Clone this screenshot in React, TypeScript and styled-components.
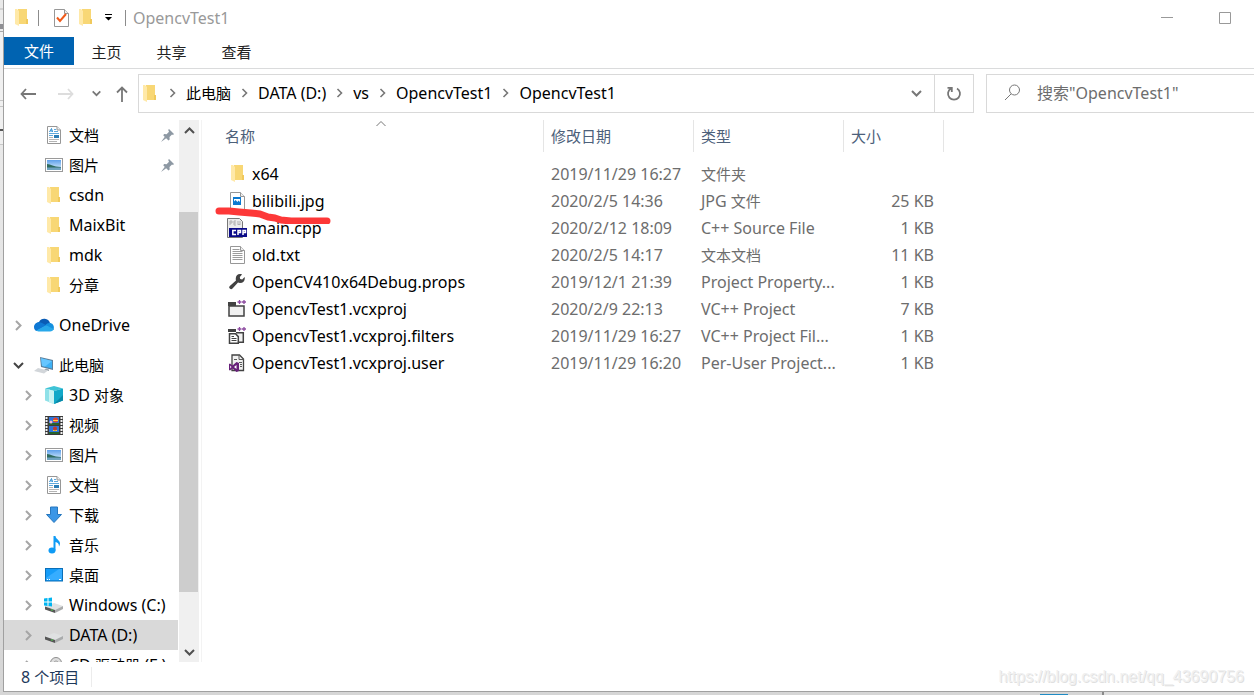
import React from "react";
import styled, { createGlobalStyle } from "styled-components";

const sans = `"Noto Sans", "Noto Sans CJK SC", sans-serif`;

const GlobalStyle = createGlobalStyle`
  *, *::before, *::after { box-sizing: border-box; }
  body { margin: 0; overflow: hidden; background: #e4e4e4; }
  button, input { font: inherit; color: inherit; border: 0; background: none; padding: 0; margin: 0; outline: none; }
  svg { display: block; flex: none; }
`;

const Desktop = styled.div`
  display: flex;
  height: 100vh;
  padding: 0 0 3px 3px;
  background: linear-gradient(#eeeeee, #d6d6d6);
  position: relative;
`;

const Backdrop = styled.div`
  position: absolute;
  left: 0;
  top: 0;
  width: 3px;
  height: 145px;
  background: linear-gradient(
    #e9e9e9 8px, #d2d2d2 8px 10px, #ececec 10px 24px, #8f8f94 24px 29px, #ececec 29px 31px,
    #a9a9a9 31px 32px, #f0f0f0 32px 100px, #c4c4c4 100px 101px, #f0f0f0 101px 106px,
    #c4c4c4 106px 107px, #f0f0f0 107px 129px, #555 129px 131px, #f0f0f0 131px
  );
  border-bottom: 1px solid #c8c8c8;
`;

const BackdropEdge = styled.div`
  position: absolute;
  right: 0;
  bottom: 0;
  width: 152px;
  height: 3px;
  border-left: 2px solid #8a8a8a;
  background: #dedede;
`;

const BackdropTab = styled.div`
  position: absolute;
  right: 186px;
  bottom: 0;
  width: 28px;
  height: 1px;
  background: #1f8bc4;
`;

const Window = styled.div`
  flex: 1;
  min-width: 0;
  display: flex;
  flex-direction: column;
  position: relative;
  background: #fff;
  border-left: 1px solid #a0a0a0;
  border-bottom: 1px solid #a0a0a0;
  font: 15px/20px ${sans};
  color: #000;
`;

const Latin = styled.span`
  font-size: 16px;
`;

const TitleBar = styled.header`
  display: flex;
  align-items: center;
  height: 37px;
  padding: 0 0 2px 11px;
`;

const QuickButton = styled.button<{ $w: number }>`
  width: ${(p) => p.$w}px;
  height: 28px;
  display: flex;
  align-items: center;
`;

const Divider = styled.span<{ $gap: number }>`
  width: 1px;
  height: 16px;
  background: #8c8c8c;
  margin-right: ${(p) => p.$gap}px;
`;

const Title = styled.h1`
  flex: 1;
  margin: 0;
  font: inherit;
  color: #999;
`;

const CaptionButton = styled.button`
  width: 58px;
  height: 35px;
  display: flex;
  align-items: center;
  justify-content: center;
`;

const Tabs = styled.nav`
  display: flex;
  height: 32px;
  padding-bottom: 3px;
  border-bottom: 1px solid #dadbdc;
`;

const Tab = styled.button<{ $active?: boolean }>`
  width: ${(p) => (p.$active ? 70 : 65)}px;
  padding-top: ${(p) => (p.$active ? 0 : 2)}px;
  background: ${(p) => (p.$active ? "#0063b1" : "none")};
  color: ${(p) => (p.$active ? "#fff" : "#222")};
`;

const NavRow = styled.div`
  display: flex;
  align-items: center;
  height: 51px;
  padding: 0 0 2px 6px;
`;

const NavButton = styled.button<{ $w: number }>`
  width: ${(p) => p.$w}px;
  height: 30px;
  display: flex;
  align-items: center;
  justify-content: center;
`;

const AddressBox = styled.div`
  flex: 1;
  min-width: 0;
  display: flex;
  align-items: center;
  height: 39px;
  padding-left: 4px;
  border: 1px solid #d9d9d9;
`;

const Crumbs = styled.ol`
  flex: 1;
  display: flex;
  align-items: center;
  margin: 0;
  padding: 0 0 2px 3px;
  list-style: none;
  white-space: nowrap;
`;

const Crumb = styled.li`
  display: flex;
  align-items: center;
`;

const RefreshButton = styled.button`
  width: 39px;
  height: 37px;
  display: flex;
  align-items: center;
  justify-content: center;
  border-left: 1px solid #d9d9d9;
`;

const SearchBox = styled.label`
  width: 268px;
  height: 39px;
  margin-left: 12px;
  padding: 0 0 2px 17px;
  display: flex;
  align-items: center;
  gap: 16px;
  border: 1px solid #d9d9d9;
  border-right: 0;
`;

const SearchInput = styled.input`
  flex: 1;
  min-width: 0;
  font-size: 16px;
  &::placeholder { color: #6d6d6d; opacity: 1; }
`;

const Body = styled.div`
  flex: 1;
  min-height: 0;
  display: flex;
`;

const Sidebar = styled.aside`
  width: 198px;
  display: flex;
  gap: 1px;
  padding-right: 2px;
  border-right: 1px solid #f3f3f3;
  overflow: hidden;
`;

const Tree = styled.nav`
  flex: 1;
  min-width: 0;
  overflow: hidden;
`;

const TreeGroup = styled.ul`
  margin: 0 0 10px;
  padding: 0;
  list-style: none;
`;

const TreeItem = styled.button<{ $level: number; $selected?: boolean }>`
  display: flex;
  align-items: center;
  width: 100%;
  height: 30px;
  padding-left: ${(p) => (p.$level ? 14 : 4)}px;
  padding-right: 4px;
  background: ${(p) => (p.$selected ? "#d9d9d9" : "none")};
  white-space: nowrap;
  text-align: left;
`;

const Expander = styled.span`
  width: 20px;
  display: flex;
  justify-content: center;
`;

const TreeIcon = styled.span`
  width: 31px;
  display: flex;
  justify-content: center;
`;

const TreeLabel = styled.span`
  flex: 1;
`;

const ScrollTrack = styled.div`
  width: 20px;
  display: flex;
  flex-direction: column;
  background: #f0f0f0;
`;

const ScrollButton = styled.button`
  height: 20px;
  display: flex;
  align-items: center;
  justify-content: center;
`;

const ScrollArea = styled.div`
  flex: 1;
  display: flex;
  flex-direction: column;
`;

const Before = styled.div`
  flex: 72;
`;

const Thumb = styled.div`
  flex: 379;
  width: 19px;
  background: #cdcdcd;
`;

const After = styled.div`
  flex: 50;
`;

const FilePane = styled.main`
  flex: 1;
  min-width: 0;
  padding-left: 16px;
  position: relative;
`;

const Table = styled.table`
  width: 726px;
  table-layout: fixed;
  border-collapse: separate;
  border-spacing: 0;
  & thead::after { content: ""; display: block; height: 8px; }
`;

const HeadCell = styled.th<{ $w: number }>`
  position: relative;
  width: ${(p) => p.$w}px;
  height: 32px;
  padding: 0 7px;
  text-align: left;
  font-weight: 400;
  color: #4c607a;
  border-right: 1px solid #e5e5e5;
`;

const SortMark = styled.span`
  position: absolute;
  top: 0;
  left: 50%;
  transform: translateX(-50%);
`;

const Cell = styled.td<{ $right?: boolean }>`
  height: 27px;
  padding: 0 10px 0 7px;
  color: #6d6d6d;
  text-align: ${(p) => (p.$right ? "right" : "left")};
  white-space: nowrap;
`;

const FileName = styled.div`
  display: flex;
  align-items: center;
  gap: 5px;
  padding-left: 2px;
  color: #000;
`;

const FileIcon = styled.span`
  width: 20px;
  display: flex;
  justify-content: center;
`;

const Underline = styled.svg`
  position: absolute;
  left: 12px;
  top: 84px;
  pointer-events: none;
`;

const StatusBar = styled.footer`
  display: flex;
  align-items: center;
  height: 29px;
  padding-left: 17px;
  color: #1e395b;
`;

const StatusText = styled.span`
  padding-right: 12px;
  border-right: 1px solid #ececec;
`;

const Watermark = styled.span`
  position: absolute;
  right: 10px;
  bottom: 4px;
  font: 16px/20px "Liberation Sans", sans-serif;
  color: #f0f0f0;
  text-shadow: 1px 1px 0 #e0e0e0;
`;

/* Latin runs are set one size larger than the Chinese text beside them. */
const Mixed = ({ text }: { text: string }) => (
  <span>
    {text.split(/([\u4e00-\u9fff]+)/).map((run, i) => (i % 2 ? run : run && <Latin key={i}>{run}</Latin>))}
  </span>
);

type Dir = "up" | "down" | "right";
const chevrons: Record<Dir, string> = {
  up: "M2 9 6.500 4.500 11 9",
  down: "M2 4 6.500 8.500 11 4",
  right: "M4 2 8.500 6.500 4 11",
};

const Chevron = ({ dir, color = "#777", size = 13, width = 2 }: { dir: Dir; color?: string; size?: number; width?: number }) => (
  <svg width={size} height={size} viewBox="0 0 13 13" fill="none" stroke={color} strokeWidth={width}>
    <path d={chevrons[dir]} />
  </svg>
);

const CrumbArrow = () => (
  <svg width="27" height="13" viewBox="0 0 27 13" fill="none" stroke="#777" strokeWidth="1.600">
    <path d="M11.500 3l4 4-4 4" />
  </svg>
);

const Folder = () => (
  <svg width="13" height="17" viewBox="0 0 13 17">
    <path d="M3 0h9v10h1v5H3z" fill="#f8d775" />
    <path d="M0 0h2l2 2v15l-4-2z" fill="#ffe9a8" />
    <path d="M11 10h2v5h-2z" fill="#f0c95c" />
  </svg>
);

const DocIcon = () => (
  <svg width="16" height="18" viewBox="0 0 16 18">
    <path d="M1.500.5h9.500L14.500 4v13.500h-13z" fill="#fff" stroke="#979797" />
    <path d="M11 .5V4h3.500" fill="#eee" stroke="#979797" />
    <path d="M3.500 6 5.500 2.500 6.500 6M4.500 5h2" fill="none" stroke="#2a8dd4" />
    <path d="M8 3.500h2M8 5.500h4M3 7.500h10M3 9.500h4" stroke="#5fa9dc" />
    <path d="M3 11.500h4M3 13.500h10M3 15.500h8" stroke="#b4b4b4" />
    <rect x="8" y="9" width="5" height="3" fill="#2c7db5" />
  </svg>
);

const PictureIcon = () => (
  <svg width="18" height="14" viewBox="0 0 18 14">
    <defs>
      <linearGradient id="sky" x2="0" y2="1">
        <stop stopColor="#5ea0ea" />
        <stop offset="1" stopColor="#e2f3ff" />
      </linearGradient>
    </defs>
    <rect x=".5" y=".5" width="17" height="13" fill="#fff" stroke="#9a9a9a" />
    <path d="M2 2h14v10H2z" fill="url(#sky)" />
    <path d="M2 6c4 0 6 3 14 3v1H2z" fill="#2f6b5e" />
    <path d="M2 9.500h14V12H2z" fill="#6fa3c0" />
  </svg>
);

const CloudIcon = () => (
  <svg width="20" height="14" viewBox="0 0 20 14">
    <path d="M5 4a6 6 0 0 1 11 1l-4 4-9-4z" fill="#0a5cb5" />
    <path d="M5 4.200C2 4.200 0 6.500 0 9c0 2 1 3.400 2.500 4L13 7.500 8 5A5 5 0 0 0 5 4.200z" fill="#0f78d4" />
    <path d="M15.500 5c-2 0-3 .8-4 2l6 5h2c1-3 0-7-4-7z" fill="#1490df" />
    <path d="M2 12.800 12 7.200l7.700 3.800c-.5 1.500-1.700 2.500-3.700 2.500H4.500z" fill="#28a8ea" />
  </svg>
);

const PcIcon = () => (
  <svg width="20" height="17" viewBox="0 0 20 17">
    <path d="M6 0l13 3v10l-12-3z" fill="#5b7f9c" />
    <path d="M7 1.200 18 4v7.500L8 9z" fill="#3eb1f5" />
    <path d="M7 1.200 18 4l-7 5.500L8 9z" fill="#66c6ff" />
    <path d="M12 11.500l3 1v1.500l-5-1z" fill="#9aa5ad" />
    <path d="M4 11l10 2.500-4 3L0 14z" fill="#d2d6da" />
  </svg>
);

const CubeIcon = () => (
  <svg width="18" height="18" viewBox="0 0 18 18">
    <path d="M9 0l9 2.500L9 5 0 2.500z" fill="#3fc3d6" />
    <path d="M0 2.500 9 5v13l-9-3.500z" fill="#8fe1e8" />
    <path d="M4 3.600 9 5v13l-5-1.600z" fill="#c9f3f3" />
    <path d="M18 2.500 9 5v13l9-3.500z" fill="#12a8c8" />
    <path d="M18 9v5.500L9 18z" fill="#0789a8" />
  </svg>
);

const VideoIcon = () => (
  <svg width="18" height="19" viewBox="0 0 18 19">
    <path d="M0 0h18v19H0z" fill="#3a3a3a" />
    <path d="M1.500 1v18M16.500 1v18" stroke="#f2f2f2" strokeWidth="2" strokeDasharray="2 1" />
    <path d="M4 1h10v8H4zM4 10h10v8H4z" fill="#2f74dc" />
    <path d="M4 7h10v2H4zM4 16h10v2H4z" fill="#25642c" />
    <circle cx="10.500" cy="4" r="2.500" fill="#e2472e" />
    <path d="M8 4h5v1H8zM8 14h4v1H8z" fill="#ffd33c" />
    <circle cx="6" cy="6" r="1.500" fill="#f4b8d3" />
    <circle cx="10" cy="12.500" r="2" fill="#c23b2a" />
  </svg>
);

const DownloadIcon = () => (
  <svg width="18" height="18" viewBox="0 0 18 18">
    <path d="M5.500 1h7v7.500h4L9 16.500 1.500 8.500h4z" fill="#3b96e6" stroke="#2677be" />
  </svg>
);

const MusicIcon = () => (
  <svg width="18" height="18" viewBox="0 0 18 18" fill="#0f9bf5">
    <ellipse cx="7" cy="14.500" rx="3.500" ry="3" />
    <path d="M8.500 0h2c0 3 4.500 4 4.500 7.500 0 1-.4 2-1 3 0-3-1.500-4-3.500-4.500v8.500h-2z" />
  </svg>
);

const DesktopIcon = () => (
  <svg width="18" height="14" viewBox="0 0 18 14">
    <rect x=".5" y=".5" width="17" height="12.500" fill="#169cf8" stroke="#0a6fb8" />
    <path d="M1 10 14 1h3v11H1z" fill="#36adff" />
    <path d="M2 11.500h1M4 11.500h1M14 11.500h2" stroke="#fff" />
  </svg>
);

const DriveIcon = ({ win }: { win?: boolean }) => (
  <svg width="20" height="16" viewBox="0 0 20 16">
    <path d="M1 9.500 10 6l9 3-8 4z" fill="#dfe1e2" />
    <path d="M1 9.500 11 13v3L1 12.500z" fill="#565656" />
    <path d="M19 9v3l-8 4v-3z" fill="#a9abac" />
    <path d="M7 13h2" stroke="#4fd04f" />
    {win && <path d="M0 1.500 3.500 1v3.500H0zM4.500 1 8 .500v4H4.500zM0 5.500h3.500V9L0 8.500zM4.500 5.500H8v4L4.500 9z" fill="#00b4f0" />}
  </svg>
);

const DiscIcon = () => (
  <svg width="18" height="18" viewBox="0 0 18 18">
    <circle cx="11" cy="7" r="5.500" fill="#ddd" stroke="#8d8d8d" />
    <circle cx="11" cy="7" r="2" fill="#fff" stroke="#999" />
    <path d="M0 12l9-3 9 3v3l-9 3-9-3z" fill="#ccc" />
  </svg>
);

const PinIcon = () => (
  <svg width="13" height="13" viewBox="0 0 13 13" fill="#8d98a3">
    <path d="M8 0l5 5-1 1-1-.4-2.500 2.500.2 2.400-1.200 1L2.200 6.200l1-1.100 2.400.2L8 2.800 7.200 1z" />
    <path d="M4 7.500 5.500 9 0 13z" />
  </svg>
);

const PageShape = () => (
  <>
    <path d="M.5.5h10l4 4v13h-14z" fill="#fff" stroke="#979797" />
    <path d="M10.500.5v4h4" fill="#eee" stroke="#979797" />
  </>
);

const JpgIcon = () => (
  <svg width="15" height="18" viewBox="0 0 15 18">
    <PageShape />
    <path d="M3 5h8v8H3z" fill="#0c7ad1" />
    <path d="M4 7h6v3L8.500 8.500 7.500 10 5.500 8 4 9.500z" fill="#fff" />
  </svg>
);

const CppIcon = () => (
  <svg width="20" height="20" viewBox="0 0 20 20">
    <path d="M.5.5h12l3 3v16H.5z" fill="#ececec" stroke="#777" />
    <path d="M3 3v4M3 3h2v2H3M7 7V3h2M7 5h2M7 7h2M11 3v4l1-1 1 1V3" fill="none" stroke="#b0b0b0" />
    <path d="M2 10h18v9H2z" fill="#0a0a88" />
    <path d="M9 12.500H5.800v4H9M11 17v-4.500h2.500v2H11M16 17v-4.500h2.500v2H16" fill="none" stroke="#fff" strokeWidth="1.500" />
  </svg>
);

const TextIcon = () => (
  <svg width="15" height="18" viewBox="0 0 15 18">
    <PageShape />
    <path d="M2.500 3.500h7M2.500 5.500h10M2.500 7.500h10M2.500 9.500h10M2.500 11.500h10M2.500 13.500h10" stroke="#9c9c9c" />
  </svg>
);

const WrenchIcon = () => (
  <svg width="16" height="16" viewBox="0 0 16 16">
    <path d="M11 0c1 0 1.500.1 2 .4L10.800 3l.4 2 2 .4L15.600 3c.8 3-1 6-4.600 6-.8 0-1.400-.2-2-.4L3.500 14.500a1.800 1.800 0 0 1-2.700-2.600L7 6.500C6 3 8 0 11 0z" fill="#424242" />
  </svg>
);

const Plus = () => (
  <>
    <path d="M8.500 0h9.500v5H8.500z" fill="#fff" />
    <path d="M11.500 0v4M9.500 2h4M16 0v4M14 2h4" stroke="#8d4ba0" strokeWidth="1.300" />
  </>
);

const ProjectIcon = () => (
  <svg width="18" height="17" viewBox="0 0 18 17">
    <path d="M1 6h15v10H1z" fill="#f1f1f1" stroke="#424242" strokeWidth="1.500" />
    <path d="M0 2h8v4H0z" fill="#424242" />
    <Plus />
  </svg>
);

const FiltersIcon = () => (
  <svg width="18" height="17" viewBox="0 0 18 17">
    <path d="M0 2h8v3H0z" fill="#424242" />
    <path d="M8 5.700h7.300v9.600H11" fill="#f1f1f1" stroke="#424242" strokeWidth="1.500" />
    <path d="M1.500 6.800h6l2.800 2.800v6.700H1.500z" fill="#fff" stroke="#424242" strokeWidth="1.500" />
    <path d="M3.500 9.500H6M3.500 11.500h5M3.500 13.500h5" stroke="#424242" />
    <Plus />
  </svg>
);

const UserIcon = () => (
  <svg width="16" height="18" viewBox="0 0 16 18">
    <path d="M3 1h7.500L14.500 5v11.500H3z" fill="#f1f1f1" stroke="#424242" strokeWidth="1.300" />
    <path d="M10 1v4.500h4.500M5 5.500h3M10 8.500h3M11 10.500h2M11 12.500h2" fill="none" stroke="#5a5a5a" />
    <path d="M7.500 8 10 9v8l-2.500 1-4-3.500L1 16.500 0 16v-6l1-.5L3.500 11.500z" fill="#68217a" />
    <path d="M7.500 11v4L5 13zM1.200 11.500v3l1.300-1.500z" fill="#fff" />
  </svg>
);

interface Node {
  label: string;
  icon: React.ReactNode;
  level?: number;
  pin?: boolean;
  state?: "open" | "closed";
  selected?: boolean;
}

const groups: Node[][] = [
  [
    { label: "文档", icon: <DocIcon />, pin: true },
    { label: "图片", icon: <PictureIcon />, pin: true },
    { label: "csdn", icon: <Folder /> },
    { label: "MaixBit", icon: <Folder /> },
    { label: "mdk", icon: <Folder /> },
    { label: "分章", icon: <Folder /> },
  ],
  [{ label: "OneDrive", icon: <CloudIcon />, level: 0, state: "closed" }],
  [
    { label: "此电脑", icon: <PcIcon />, level: 0, state: "open" },
    { label: "3D 对象", icon: <CubeIcon />, state: "closed" },
    { label: "视频", icon: <VideoIcon />, state: "closed" },
    { label: "图片", icon: <PictureIcon />, state: "closed" },
    { label: "文档", icon: <DocIcon />, state: "closed" },
    { label: "下载", icon: <DownloadIcon />, state: "closed" },
    { label: "音乐", icon: <MusicIcon />, state: "closed" },
    { label: "桌面", icon: <DesktopIcon />, state: "closed" },
    { label: "Windows (C:)", icon: <DriveIcon win />, state: "closed" },
    { label: "DATA (D:)", icon: <DriveIcon />, state: "closed", selected: true },
    { label: "CD 驱动器 (F:)", icon: <DiscIcon />, state: "closed" },
  ],
];

const files: [React.ReactNode, string, string, string, string][] = [
  [<Folder />, "x64", "2019/11/29 16:27", "文件夹", ""],
  [<JpgIcon />, "bilibili.jpg", "2020/2/5 14:36", "JPG 文件", "25 KB"],
  [<CppIcon />, "main.cpp", "2020/2/12 18:09", "C++ Source File", "1 KB"],
  [<TextIcon />, "old.txt", "2020/2/5 14:17", "文本文档", "11 KB"],
  [<WrenchIcon />, "OpenCV410x64Debug.props", "2019/12/1 21:39", "Project Property...", "1 KB"],
  [<ProjectIcon />, "OpencvTest1.vcxproj", "2020/2/9 22:13", "VC++ Project", "7 KB"],
  [<FiltersIcon />, "OpencvTest1.vcxproj.filters", "2019/11/29 16:27", "VC++ Project Fil...", "1 KB"],
  [<UserIcon />, "OpencvTest1.vcxproj.user", "2019/11/29 16:20", "Per-User Project...", "1 KB"],
];

const path = ["此电脑", "DATA (D:)", "vs", "OpencvTest1", "OpencvTest1"];

export default function App() {
  return (
    <Desktop>
      <GlobalStyle />
      <Backdrop />
      <BackdropEdge />
      <BackdropTab />
      <Window>
        <TitleBar>
          <QuickButton $w={23} aria-label="窗口"><Folder /></QuickButton>
          <Divider $gap={15} />
          <QuickButton $w={25} aria-label="属性">
            <svg width="15" height="18" viewBox="0 0 15 18">
              <PageShape />
              <path d="M3 8.500 6 12l6-7" fill="none" stroke="#f05a1a" strokeWidth="2" />
            </svg>
          </QuickButton>
          <QuickButton $w={26} aria-label="新建文件夹"><Folder /></QuickButton>
          <QuickButton $w={20} aria-label="自定义快速访问工具栏">
            <svg width="7" height="7" viewBox="0 0 7 7"><path d="M0 0h7v1H0zM0 3h7L3.500 6.500z" /></svg>
          </QuickButton>
          <Divider $gap={7} />
          <Title><Mixed text="OpencvTest1" /></Title>
          <CaptionButton aria-label="最小化">
            <svg width="12" height="12" viewBox="0 0 12 12"><path d="M0 5.500h12" stroke="#999" /></svg>
          </CaptionButton>
          <CaptionButton aria-label="最大化">
            <svg width="12" height="12" viewBox="0 0 12 12"><path d="M.5.5h11v11H.5z" fill="none" stroke="#999" /></svg>
          </CaptionButton>
        </TitleBar>
        <Tabs>
          <Tab $active>文件</Tab>
          <Tab>主页</Tab>
          <Tab>共享</Tab>
          <Tab>查看</Tab>
        </Tabs>
        <NavRow>
          <NavButton $w={36} aria-label="后退">
            <svg width="16" height="12" viewBox="0 0 16 12" fill="none" stroke="#777" strokeWidth="1.800"><path d="M6 1 1.500 6 6 11M1.500 6H16" /></svg>
          </NavButton>
          <NavButton $w={40} aria-label="前进">
            <svg width="16" height="12" viewBox="0 0 16 12" fill="none" stroke="#ddd" strokeWidth="1.800"><path d="M10 1l4.500 5L10 11M14.500 6H0" /></svg>
          </NavButton>
          <NavButton $w={20} aria-label="最近位置"><Chevron dir="down" size={11} /></NavButton>
          <NavButton $w={32} aria-label="上移">
            <svg width="14" height="16" viewBox="0 0 14 16" fill="none" stroke="#777" strokeWidth="1.800"><path d="M2 6.500 7 1.500l5 5M7 1.500V16" /></svg>
          </NavButton>
          <AddressBox>
            <Folder />
            <Crumbs>
              {path.map((p, i) => (
                <Crumb key={i}><CrumbArrow /><Mixed text={p} /></Crumb>
              ))}
            </Crumbs>
            <NavButton $w={36} aria-label="以前的位置"><Chevron dir="down" /></NavButton>
            <RefreshButton aria-label="刷新">
              <svg width="16" height="16" viewBox="0 0 16 16" fill="none" stroke="#777" strokeWidth="1.800">
                <path d="M11 2.500a6 6 0 1 1-6 0M1.500 1.800h4.300v4.200" />
              </svg>
            </RefreshButton>
          </AddressBox>
          <SearchBox>
            <svg width="17" height="17" viewBox="0 0 17 17" fill="none" stroke="#777">
              <circle cx="10.500" cy="6" r="5" /><path d="M7 10 1 16" />
            </svg>
            <SearchInput placeholder={'搜索"OpencvTest1"'} aria-label="搜索" />
          </SearchBox>
        </NavRow>
        <Body>
          <Sidebar>
            <Tree>
              {groups.map((g, gi) => (
                <TreeGroup key={gi}>
                  {g.map((n) => (
                    <li key={n.label}>
                      <TreeItem $level={n.level ?? 1} $selected={n.selected}>
                        <Expander>
                          {n.state === "open" && <Chevron dir="down" color="#444" />}
                          {n.state === "closed" && <Chevron dir="right" color="#a6a6a6" />}
                        </Expander>
                        <TreeIcon>{n.icon}</TreeIcon>
                        <TreeLabel><Mixed text={n.label} /></TreeLabel>
                        {n.pin && <PinIcon />}
                      </TreeItem>
                    </li>
                  ))}
                </TreeGroup>
              ))}
            </Tree>
            <ScrollTrack>
              <ScrollButton aria-label="向上滚动"><Chevron dir="up" color="#505050" /></ScrollButton>
              <ScrollArea><Before /><Thumb /><After /></ScrollArea>
              <ScrollButton aria-label="向下滚动"><Chevron dir="down" color="#505050" /></ScrollButton>
            </ScrollTrack>
          </Sidebar>
          <FilePane>
            <Table>
              <thead>
                <tr>
                  <HeadCell $w={326}>
                    名称
                    <SortMark>
                      <svg width="11" height="7" viewBox="0 0 11 7" fill="none" stroke="#777"><path d="M1 6l4.500-4.500L10 6" /></svg>
                    </SortMark>
                  </HeadCell>
                  <HeadCell $w={150}>修改日期</HeadCell>
                  <HeadCell $w={150}>类型</HeadCell>
                  <HeadCell $w={100}>大小</HeadCell>
                </tr>
              </thead>
              <tbody>
                {files.map(([icon, name, date, type, size]) => (
                  <tr key={name}>
                    <Cell><FileName><FileIcon>{icon}</FileIcon><Mixed text={name} /></FileName></Cell>
                    <Cell><Mixed text={date} /></Cell>
                    <Cell><Mixed text={type} /></Cell>
                    <Cell $right><Mixed text={size} /></Cell>
                  </tr>
                ))}
              </tbody>
            </Table>
            <Underline width="120" height="20" viewBox="0 0 120 20" fill="none" stroke="#fd3838" strokeWidth="7" strokeLinecap="round" strokeLinejoin="round">
              <path d="M5 7h10l10 1 12 1 9 1 8 3 7 1 6 2 10 1h36" />
            </Underline>
          </FilePane>
        </Body>
        <StatusBar><StatusText><Mixed text="8 个项目" /></StatusText></StatusBar>
        <Watermark>https://blog.csdn.net/qq_43690756</Watermark>
      </Window>
    </Desktop>
  );
}
